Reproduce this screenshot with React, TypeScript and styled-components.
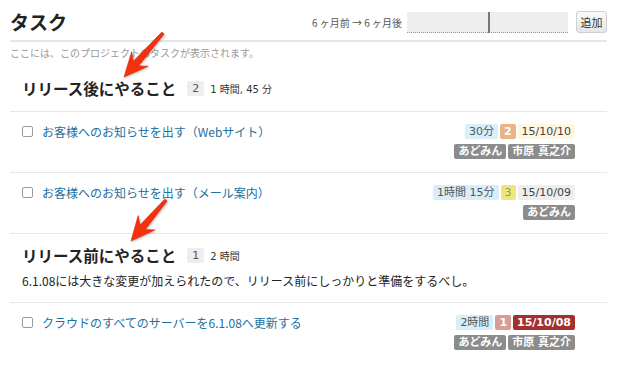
import styled, { createGlobalStyle } from "styled-components";

const GlobalStyle = createGlobalStyle`
    html, body {
        margin: 0;
        padding: 0;
        background: #fff;
    }
    body {
        font-family: "Noto Sans CJK JP", "Noto Sans", sans-serif;
        color: #333;
    }
`

type Tone = 'time' | 'orange' | 'yellow' | 'pink' | 'cream' | 'gray' | 'red' | 'user';

interface Task {
    title: string;
    time: string;
    priority: string;
    priorityTone: Tone;
    date: string;
    dateTone: Tone;
    users: string[];
}

interface Group {
    name: string;
    count: string;
    total: string;
    description?: string;
    tasks: Task[];
}

const groups: Group[] = [
    {
        name: 'リリース後にやること',
        count: '2',
        total: '1 時間, 45 分',
        tasks: [
            { title: 'お客様へのお知らせを出す（Webサイト）', time: '30分', priority: '2', priorityTone: 'orange', date: '15/10/10', dateTone: 'cream', users: ['あどみん', '市原 真之介'] },
            { title: 'お客様へのお知らせを出す（メール案内）', time: '1時間 15分', priority: '3', priorityTone: 'yellow', date: '15/10/09', dateTone: 'gray', users: ['あどみん'] },
        ],
    },
    {
        name: 'リリース前にやること',
        count: '1',
        total: '2 時間',
        description: '6.1.08には大きな変更が加えられたので、リリース前にしっかりと準備をするべし。',
        tasks: [
            { title: 'クラウドのすべてのサーバーを6.1.08へ更新する', time: '2時間', priority: '1', priorityTone: 'pink', date: '15/10/08', dateTone: 'red', users: ['あどみん', '市原 真之介'] },
        ],
    },
];

// callout arrows drawn over the page: tail -> tip
const arrows = [
    { x1: 163, y1: 33, x2: 124, y2: 77 },
    { x1: 166, y1: 200, x2: 131, y2: 241 },
];

const arrowPoints = ({ x1, y1, x2, y2 }: { x1: number; y1: number; x2: number; y2: number }) => {
    const dx = x2 - x1;
    const dy = y2 - y1;
    const len = Math.hypot(dx, dy);
    const ux = dx / len, uy = dy / len;
    const nx = -uy, ny = ux;
    const bx = x2 - ux * 21, by = y2 - uy * 21;
    const p = (x: number, y: number) => `${x.toFixed(1)},${y.toFixed(1)}`;
    return [
        p(x1 + nx * 1.5, y1 + ny * 1.5),
        p(bx + ux * 3 + nx * 3.5, by + uy * 3 + ny * 3.5),
        p(bx - ux * 3 + nx * 11, by - uy * 3 + ny * 11),
        p(x2, y2),
        p(bx - ux * 3 - nx * 11, by - uy * 3 - ny * 11),
        p(bx + ux * 3 - nx * 3.5, by + uy * 3 - ny * 3.5),
        p(x1 - nx * 1.5, y1 - ny * 1.5),
    ].join(' ');
};

const App = () => {
    return (
        <>
            <GlobalStyle />
            <Page>
                <Header>
                    <Title>タスク</Title>
                    <RangeBox>
                        <RangeLabel>6 ヶ月前 → 6 ヶ月後</RangeLabel>
                        <RangeTrack>
                            <RangeHandle />
                        </RangeTrack>
                        <AddButton>追加</AddButton>
                    </RangeBox>
                </Header>
                <Subtitle>ここには、このプロジェクトのタスクが表示されます。</Subtitle>

                {groups.map((group, gi) => (
                    <section key={group.name}>
                        <GroupHead divided={gi > 0}>
                            <GroupTitleRow>
                                <GroupName>{group.name}</GroupName>
                                <CountBadge>{group.count}</CountBadge>
                                <TotalTime>{group.total}</TotalTime>
                            </GroupTitleRow>
                            {group.description && <GroupDescription>{group.description}</GroupDescription>}
                        </GroupHead>
                        {group.tasks.map(task => (
                            <TaskRow key={task.title}>
                                <CheckBox />
                                <TaskLink>{task.title}</TaskLink>
                                <Meta>
                                    <MetaLine>
                                        <Tag tone="time">{task.time}</Tag>
                                        <Tag tone={task.priorityTone}>{task.priority}</Tag>
                                        <Tag tone={task.dateTone}>{task.date}</Tag>
                                    </MetaLine>
                                    <MetaLine>
                                        {task.users.map(u => (
                                            <Tag key={u} tone="user">{u}</Tag>
                                        ))}
                                    </MetaLine>
                                </Meta>
                            </TaskRow>
                        ))}
                    </section>
                ))}

                <Overlay width="617" height="373" viewBox="0 0 617 373">
                    {arrows.map((a, i) => (
                        <polygon key={i} points={arrowPoints(a)} fill="#f5300f" stroke="#d82508" strokeWidth="0.6" strokeLinejoin="round" />
                    ))}
                </Overlay>
            </Page>
        </>
    )
}

const Page = styled.div`
    position: relative;
    width: 617px;
    height: 373px;
    box-sizing: border-box;
    padding: 10px 10px 0;
    overflow: hidden;
`

const Header = styled.header`
    display: flex;
    justify-content: space-between;
    align-items: center;
    height: 24px;
    padding-bottom: 6px;
    border-bottom: 2px solid #e6e6e6;
`

const Title = styled.h1`
    margin: 0;
    font-size: 19px;
    line-height: 24px;
    font-weight: bold;
    color: #222;
`

const RangeBox = styled.div`
    display: flex;
    align-items: center;
`

const RangeLabel = styled.span`
    font-size: 10px;
    color: #555;
    margin-right: 5px;
`

const RangeTrack = styled.div`
    position: relative;
    width: 161px;
    height: 20px;
    background: #eeeeee;
    border-bottom: 1px dotted #999;
    margin-right: 8px;
`

const RangeHandle = styled.div`
    position: absolute;
    left: 81px;
    top: 0;
    width: 2px;
    height: 21px;
    background: #777;
`

const AddButton = styled.button`
    width: 31px;
    height: 22px;
    padding: 0;
    font-family: inherit;
    font-size: 11px;
    color: #333;
    border: 1px solid #d0d0d0;
    border-radius: 3px;
    background: linear-gradient(#fafafa, #e6e6e6);
`

const Subtitle = styled.p`
    margin: 4px 0 0;
    font-size: 10px;
    line-height: 14px;
    color: #999;
`

const GroupHead = styled.div<{ divided: boolean }>`
    padding: ${p => p.divided ? '11px 0 13px 12px' : '18px 0 13px 12px'};
    border-top: ${p => p.divided ? '1px solid #e8e8e8' : 'none'};
`

const GroupTitleRow = styled.div`
    display: flex;
    align-items: center;
`

const GroupName = styled.h2`
    margin: 0;
    font-size: 15.5px;
    line-height: 20px;
    font-weight: bold;
    color: #222;
`

const CountBadge = styled.span`
    margin-left: 11px;
    padding: 0 5px;
    height: 15px;
    line-height: 15px;
    font-family: "DejaVu Sans", "Noto Sans CJK JP", sans-serif;
    font-size: 11px;
    color: #555;
    background: #eeeeee;
    border-radius: 2px;
`

const TotalTime = styled.span`
    margin-left: 6px;
    font-family: "DejaVu Sans", "Noto Sans CJK JP", sans-serif;
    font-size: 10px;
    color: #333;
`

const GroupDescription = styled.p`
    margin: 8px 0 0;
    font-size: 12px;
    line-height: 16px;
    color: #222;
`

const TaskRow = styled.div`
    display: flex;
    align-items: flex-start;
    padding: 12px 32px 13px 12px;
    border-top: 1px solid #e8e8e8;
`

const CheckBox = styled.span`
    box-sizing: border-box;
    width: 11px;
    height: 11px;
    margin-top: 2px;
    margin-right: 9px;
    border: 1px solid #9a9a9a;
    border-radius: 2px;
    background: #fff;
`

const TaskLink = styled.a`
    flex: 1;
    font-size: 12px;
    line-height: 15px;
    color: #21709f;
    cursor: pointer;
`

const Meta = styled.div`
    display: flex;
    flex-direction: column;
    align-items: flex-end;
    gap: 5px;
`

const MetaLine = styled.div`
    display: flex;
    gap: 2px;
`

const toneStyles: Record<Tone, string> = {
    time: 'background: #d8effa; color: #555;',
    orange: 'background: #e9b48a; color: #fff; font-weight: bold;',
    yellow: 'background: #ece67c; color: #9a9670;',
    pink: 'background: #d99b97; color: #fff; font-weight: bold;',
    cream: 'background: #fdf6e1; color: #444;',
    gray: 'background: #eeeeee; color: #444;',
    red: 'background: #a52f2c; color: #fff; font-weight: bold;',
    user: 'background: #8c8c8c; color: #fff; font-weight: bold;',
};

const Tag = styled.span<{ tone: Tone }>`
    height: 15px;
    line-height: 15px;
    padding: 0 4px;
    font-family: "DejaVu Sans", "Noto Sans CJK JP", sans-serif;
    font-size: 11px;
    border-radius: 2px;
    white-space: nowrap;
    ${p => toneStyles[p.tone]}
`

const Overlay = styled.svg`
    position: absolute;
    top: 0;
    left: 0;
    pointer-events: none;
    filter: drop-shadow(1px 1px 1px rgba(0, 0, 0, 0.25));
`

export default App;
